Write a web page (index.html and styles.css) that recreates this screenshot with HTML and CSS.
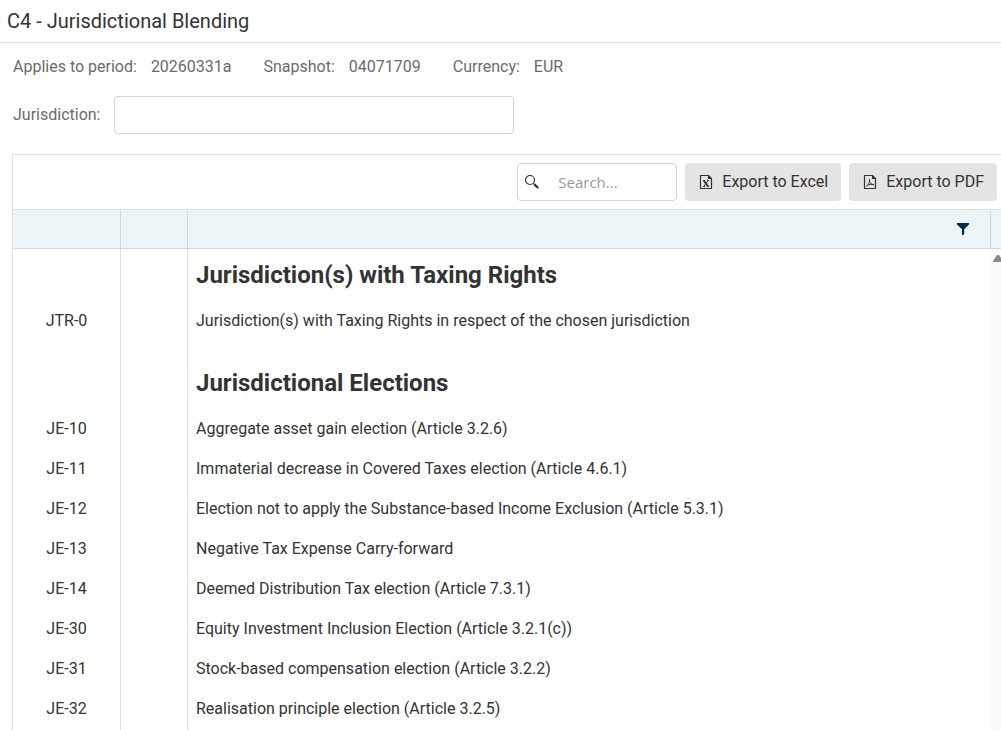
FILE: index.html
```html
<!DOCTYPE html>
<html lang="en">
<head>
    <meta charset="UTF-8">
    <meta name="viewport" content="width=device-width, initial-scale=1.0">
    <title>C4 - Jurisdictional Blending</title>
    <link rel="stylesheet" href="styles.css">
</head>
<body>
    <header class="page-header">
        <h1>C4 - Jurisdictional Blending</h1>
    </header>
    <main>
        <dl class="info">
            <div><dt>Applies to period:</dt><dd>20260331a</dd></div>
            <div><dt>Snapshot:</dt><dd>04071709</dd></div>
            <div><dt>Currency:</dt><dd>EUR</dd></div>
        </dl>
        <div class="filter">
            <label for="jurisdiction">Jurisdiction:</label>
            <input type="text" id="jurisdiction">
        </div>
        <section class="grid">
            <div class="toolbar">
                <div class="search">
                    <svg width="16" height="16" viewBox="0 0 16 16" fill="none" stroke="#333">
                        <circle cx="6" cy="6" r="4.5" stroke-width="1.2"/>
                        <path d="M9.3 9.3l1.4 1.4" stroke-width="1.2"/>
                        <path d="M10.3 10.3l3.9 3.7" stroke-width="2.3"/>
                    </svg>
                    <input type="search" placeholder="Search..." aria-label="Search">
                </div>
                <button type="button">
                    <svg width="16" height="16" viewBox="0 0 16 16" fill="none" stroke="#333">
                        <path d="M2.5 1.5h8l3 3v10h-11z" stroke-width="1.2"/>
                        <path d="M10 1.5h.8l2.7 2.7v.8H10z" fill="#333" stroke="none"/>
                        <path d="M5.8 6.5l4.2 6" stroke-width="1.8"/>
                        <path d="M10.2 6.5l-4.4 6M5 6.5h2M9 6.5h2M5 12.5h2M9 12.5h2" stroke-width="1"/>
                    </svg>
                    Export to Excel
                </button>
                <button type="button">
                    <svg width="16" height="16" viewBox="0 0 16 16" fill="none" stroke="#333">
                        <path d="M2.5 1.5h8l3 3v10h-11z" stroke-width="1.2"/>
                        <path d="M10 1.5h.8l2.7 2.7v.8H10z" fill="#333" stroke="none"/>
                        <path d="M7.5 5v2c0 2-1.5 4.5-3.3 5.5M7.6 7.5c.6 1.7 1.9 2.9 4.4 3.3M5.3 11.3c1.7-.8 4-1 6.5-.6" stroke-width="1"/>
                    </svg>
                    Export to PDF
                </button>
            </div>
            <table>
                <colgroup>
                    <col class="col-code">
                    <col class="col-flag">
                    <col>
                    <col class="col-scroll">
                </colgroup>
                <thead>
                    <tr>
                        <th></th>
                        <th></th>
                        <th class="filter-cell">
                            <svg width="14" height="14" viewBox="0 0 14 14">
                                <path d="M1 1h12v1.5L8.2 7.2V12L6 13.5V7.2L1 2.5z" fill="#03283f"/>
                            </svg>
                        </th>
                        <th></th>
                    </tr>
                </thead>
                <tbody>
                    <tr class="group first">
                        <td></td>
                        <td></td>
                        <td><h2>Jurisdiction(s) with Taxing Rights</h2></td>
                        <td class="scroll" rowspan="12">
                            <svg width="10" height="7" viewBox="0 0 10 7">
                                <path d="M4 0h2l4 6v1H0V6z" fill="#8b8b8b"/>
                            </svg>
                        </td>
                    </tr>
                    <tr><td>JTR-0</td><td></td><td>Jurisdiction(s) with Taxing Rights in respect of the chosen jurisdiction</td></tr>
                    <tr class="group"><td></td><td></td><td><h2>Jurisdictional Elections</h2></td></tr>
                    <tr><td>JE-10</td><td></td><td>Aggregate asset gain election (Article 3.2.6)</td></tr>
                    <tr><td>JE-11</td><td></td><td>Immaterial decrease in Covered Taxes election (Article 4.6.1)</td></tr>
                    <tr><td>JE-12</td><td></td><td>Election not to apply the Substance-based Income Exclusion (Article 5.3.1)</td></tr>
                    <tr><td>JE-13</td><td></td><td>Negative Tax Expense Carry-forward</td></tr>
                    <tr><td>JE-14</td><td></td><td>Deemed Distribution Tax election (Article 7.3.1)</td></tr>
                    <tr><td>JE-30</td><td></td><td>Equity Investment Inclusion Election (Article 3.2.1(c))</td></tr>
                    <tr><td>JE-31</td><td></td><td>Stock-based compensation election (Article 3.2.2)</td></tr>
                    <tr><td>JE-32</td><td></td><td>Realisation principle election (Article 3.2.5)</td></tr>
                    <tr><td></td><td></td><td></td></tr>
                </tbody>
            </table>
        </section>
    </main>
</body>
</html>
```
FILE: styles.css
```css
* {
    box-sizing: border-box;
}
body {
    margin: 0;
    height: 100vh;
    overflow: hidden;
    font-family: Roboto, sans-serif;
    font-size: 16px;
    line-height: 24px;
    color: #333;
    background-color: #fff;
}
.page-header {
    padding: 6px 7px;
    border-bottom: 1px solid #e0e0e0;
}
h1 {
    margin: 0;
    font-size: 20px;
    font-weight: 400;
    line-height: 30px;
}
main {
    padding: 12px 0 0 12px;
}
.info {
    display: flex;
    gap: 32px;
    margin: 0 0 17px 1px;
    color: #6b6b6b;
}
.info div {
    display: flex;
    gap: 14px;
}
.info dd {
    margin: 0;
}
.filter {
    display: flex;
    align-items: center;
    gap: 14px;
    margin: 0 0 20px 1px;
    color: #6b6b6b;
}
input {
    font-family: "Open Sans", sans-serif;
    font-size: 15px;
    color: #333;
    background-color: #fff;
    border: 1px solid #ced4da;
    border-radius: 4px;
    height: 38px;
}
.filter input {
    width: 400px;
    padding: 0 12px;
}
.grid {
    border-top: 1px solid #e0e0e0;
    border-left: 1px solid #e0e0e0;
}
.toolbar {
    display: flex;
    justify-content: flex-end;
    gap: 8px;
    padding: 8px 4px 8px 0;
    border-bottom: 1px solid #e0e0e0;
}
.search {
    position: relative;
    display: flex;
}
.search svg {
    position: absolute;
    left: 7px;
    top: 11px;
}
.search input {
    width: 160px;
    padding: 0 8px 0 40px;
}
.search input::placeholder {
    color: #999;
}
button {
    display: flex;
    align-items: center;
    gap: 8px;
    height: 38px;
    padding: 0 13px 1px;
    font-family: inherit;
    font-size: 16px;
    color: #333;
    background-color: #e4e4e4;
    border: none;
    border-radius: 4px;
    cursor: pointer;
}
table {
    width: 100%;
    table-layout: fixed;
    border-collapse: separate;
    border-spacing: 0;
}
.col-code {
    width: 108px;
}
.col-flag {
    width: 67px;
}
.col-scroll {
    width: 10px;
}
th {
    height: 39px;
    padding: 0;
    background-color: #ebf4f7;
    border-right: 1px solid #cfdadd;
    border-bottom: 1px solid #cfdadd;
}
th:last-child {
    border-right: none;
}
.filter-cell {
    padding-right: 20px;
    text-align: right;
}
.filter-cell svg {
    display: block;
    margin-left: auto;
}
td {
    height: 40px;
    padding: 0 8px;
    border-right: 1px solid #e0e0e0;
}
td:first-child {
    text-align: center;
}
td:nth-child(3) {
    border-right: none;
}
.group td {
    height: 68px;
    vertical-align: bottom;
}
.group.first td {
    height: 52px;
}
h2 {
    margin: 0 0 10px;
    font-size: 24px;
    font-weight: 700;
    line-height: 32px;
}
.group .scroll {
    padding: 6px 0 0 2px;
    vertical-align: top;
    background-color: #fafafa;
    border-right: none;
}
.scroll svg {
    display: block;
}
```
